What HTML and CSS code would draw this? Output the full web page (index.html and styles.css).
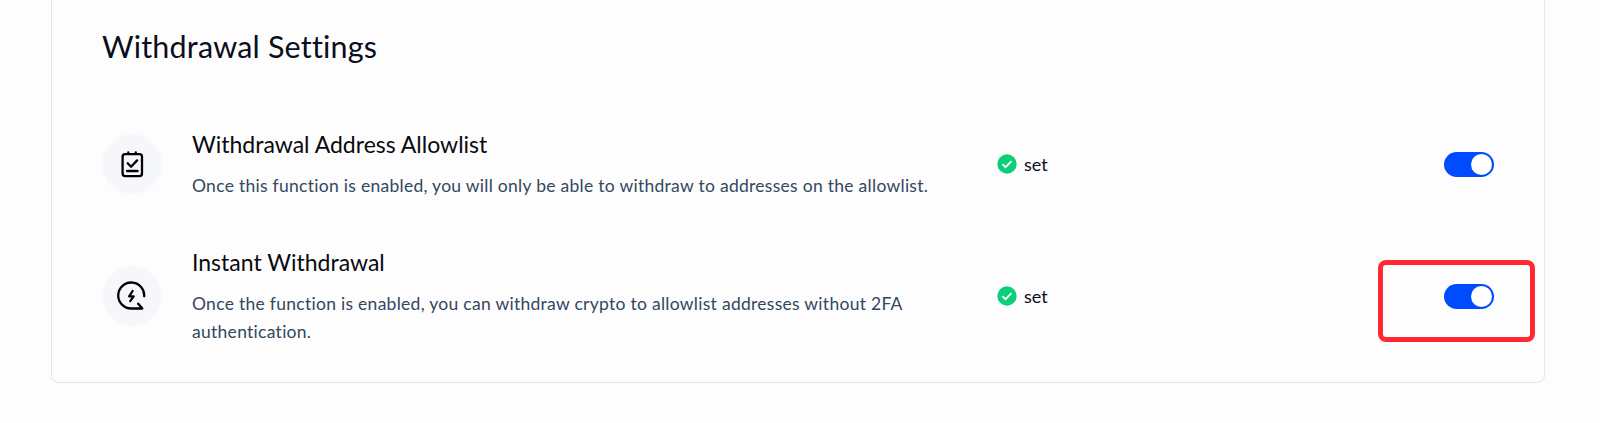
FILE: index.html
```
<!DOCTYPE html>
<html lang="en">
<head>
<meta charset="utf-8">
<title>Withdrawal Settings</title>
<link rel="stylesheet" href="styles.css">
</head>
<body>
<main class="card">
  <h1 class="heading">Withdrawal Settings</h1>
  <section class="row row-first">
    <div class="badge">
      <svg width="30" height="30" viewBox="0 0 30 30" fill="none" stroke="#000" stroke-width="2.3" stroke-linecap="round" stroke-linejoin="round">
        <rect x="5.6" y="5.2" width="19.4" height="22" rx="2.6"/>
        <path d="M11.3 3.3v1.5M18.8 3.3v1.5M10.7 14.3l3.4 3.5 6-6.4M10 22h10.6"/>
      </svg>
    </div>
    <div class="info">
      <h2 class="name">Withdrawal Address Allowlist</h2>
      <p class="desc">Once this function is enabled, you will only be able to withdraw to addresses on the allowlist.</p>
    </div>
    <div class="status">
      <svg width="20" height="20" viewBox="0 0 20 20"><circle cx="10" cy="10" r="9.7" fill="#0ccf7c"/><path d="M5.4 10.2l3.1 3 6-6" fill="none" stroke="#fff" stroke-width="1.8"/></svg>
      <span>set</span>
    </div>
    <div class="toggle"><span class="knob"></span></div>
  </section>
  <section class="row">
    <div class="badge">
      <svg width="30" height="30" viewBox="0 0 30 30" fill="none" stroke="#000" stroke-width="2.3" stroke-linecap="round" stroke-linejoin="round">
        <path d="M27.2 15.3A13 13 0 1 0 14.3 27.5H25.3L21.2 22.7"/>
        <path d="M15.6 10l-3.5 5.4h4.6L13.2 20.2" stroke-width="2.2"/>
      </svg>
    </div>
    <div class="info">
      <h2 class="name">Instant Withdrawal</h2>
      <p class="desc">Once the function is enabled, you can withdraw crypto to allowlist addresses without 2FA<br>authentication.</p>
    </div>
    <div class="status">
      <svg width="20" height="20" viewBox="0 0 20 20"><circle cx="10" cy="10" r="9.7" fill="#0ccf7c"/><path d="M5.4 10.2l3.1 3 6-6" fill="none" stroke="#fff" stroke-width="1.8"/></svg>
      <span>set</span>
    </div>
    <div class="toggle"><span class="knob"></span><span class="highlight"></span></div>
  </section>
</main>
</body>
</html>
```
FILE: styles.css
```
* { box-sizing: border-box; }
body {
  margin: 0;
  height: 423px;
  overflow: hidden;
  background: #fdfdfd;
  font-family: Lato, "Noto Sans", sans-serif;
  color: #0b0e1c;
}
.card {
  width: 1494px;
  height: 383px;
  margin-left: 51px;
  padding: 25px 50px 0;
  border: 1px solid #e5e5e6;
  border-top: 0;
  border-radius: 0 0 8px 8px;
}
.heading {
  margin: 0;
  font-size: 30.5px;
  line-height: 42px;
  font-weight: 400;
  letter-spacing: 0.2px;
}
.row {
  display: grid;
  grid-template-columns: 60px 775px 417px 50px;
  align-items: center;
  column-gap: 30px;
  height: 98px;
}
.row-first {
  height: 70px;
  margin: 62px 0 48px;
}
.badge {
  display: flex;
  align-items: center;
  justify-content: center;
  width: 60px;
  height: 60px;
  border-radius: 50%;
  background: #f6f7fb;
}
.name {
  margin: 0 0 12px;
  font-size: 23px;
  line-height: 31px;
  font-weight: 400;
  letter-spacing: 0;
  color: #090a0e;
}
.desc {
  margin: 0;
  font-size: 17.5px;
  line-height: 27.5px;
  letter-spacing: 0.28px;
  color: #33475f;
  white-space: nowrap;
}
.status {
  display: flex;
  align-items: center;
  gap: 7px;
  font-size: 18px;
}
.toggle {
  position: relative;
  display: flex;
  align-items: center;
  justify-content: flex-end;
  width: 50px;
  height: 25px;
  padding: 2px;
  border-radius: 13px;
  background: #004bfd;
}
.knob {
  width: 21px;
  height: 21px;
  border-radius: 50%;
  background: #fff;
}
.highlight {
  position: absolute;
  left: -66px;
  top: -24px;
  width: 157px;
  height: 82px;
  border: 5px solid #ff2a31;
  border-radius: 8px;
}
```
